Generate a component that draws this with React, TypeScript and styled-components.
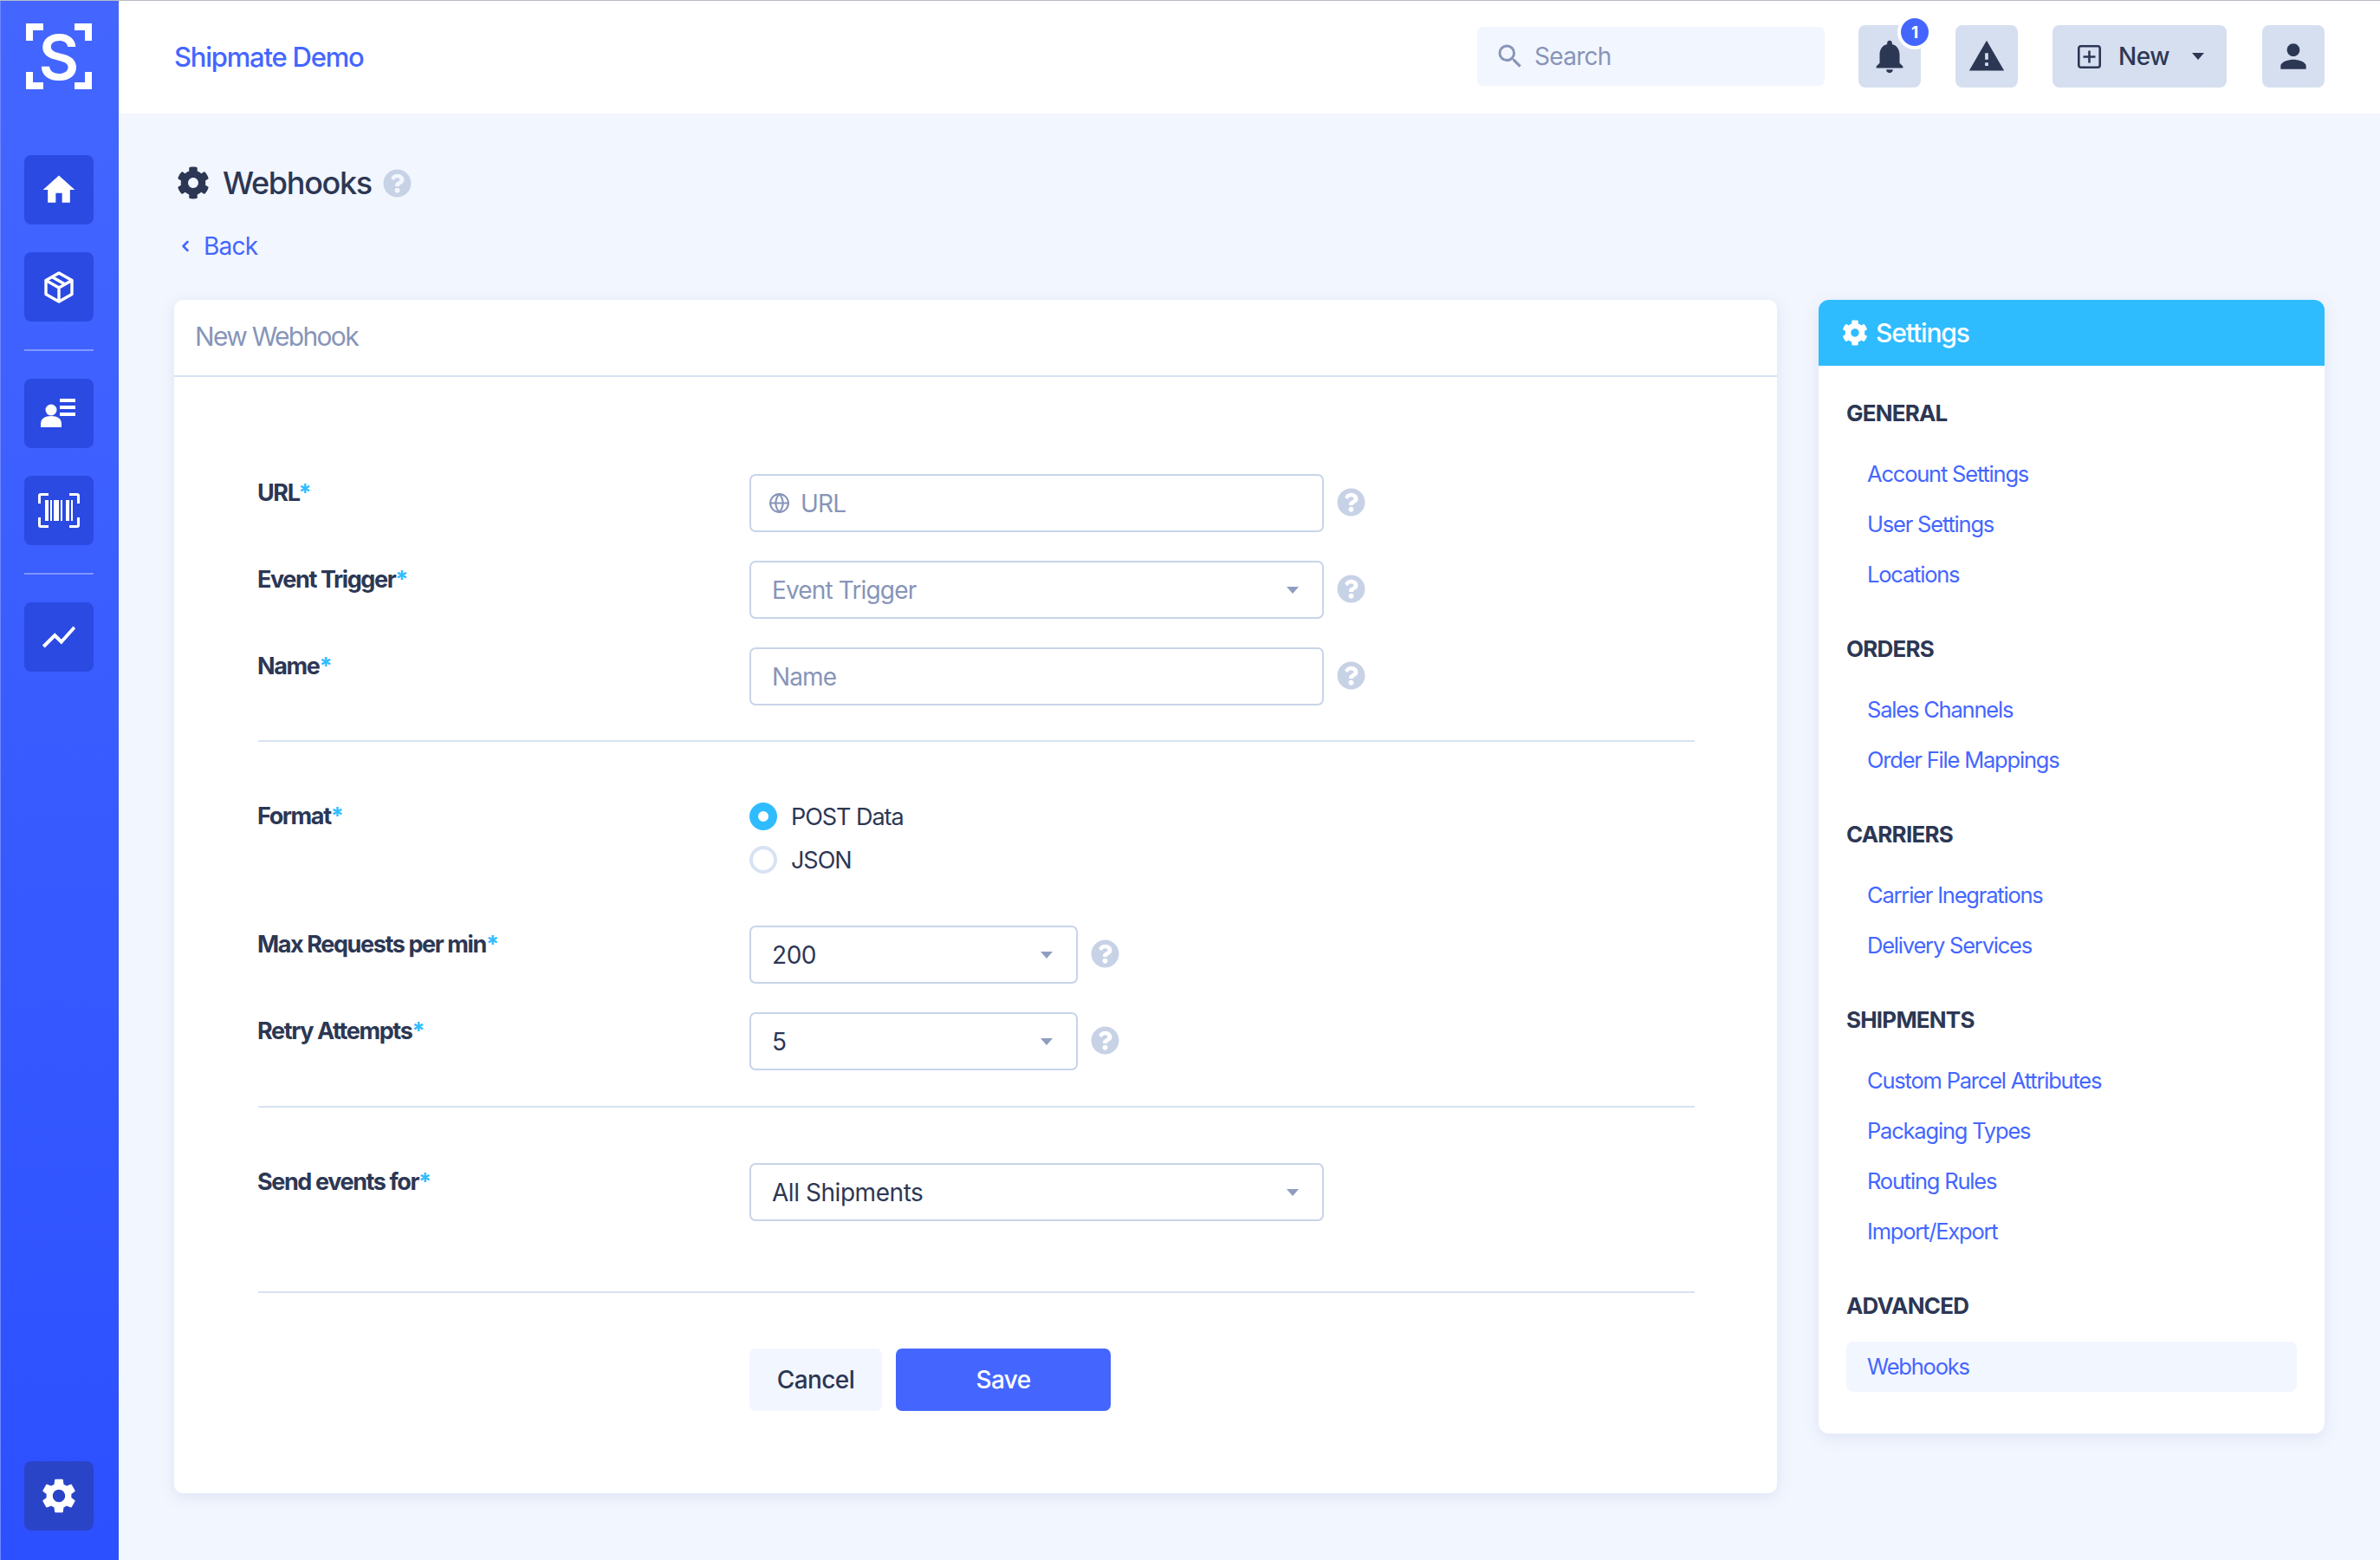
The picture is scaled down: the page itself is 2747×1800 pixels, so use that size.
import React from "react";
import styled, { createGlobalStyle } from "styled-components";
import { MdHome, MdSettings, MdNotifications, MdWarning, MdPerson, MdShowChart, MdSearch } from "react-icons/md";
import { FaCog, FaQuestionCircle } from "react-icons/fa";
import { FiChevronLeft, FiGlobe } from "react-icons/fi";

const FONT = `Inter, "Liberation Sans", sans-serif`;
const BLUE = "#4466ff";
const DARK = "#2c3754";
const MUTED = "#8795b8";
const LINE = "#d8e2f3";
const EDGE = "#c8d4e8";
const CYAN = "#2fbcff";

const Global = createGlobalStyle`
  html, body { margin: 0; padding: 0; background: #f2f6fe; }
  * { box-sizing: border-box; }
  body { font-family: ${FONT}; color: ${DARK}; }
`;

const Shell = styled.div`
  display: flex;
  width: 2747px;
  height: 1800px;
  border-top: 1px solid #b9bcc4;
  overflow: hidden;
`;

const Rail = styled.nav`
  flex: 0 0 137px;
  display: flex;
  flex-direction: column;
  align-items: center;
  padding: 26px 2px 34px 0;
  border-left: 1px solid #6d87ff;
  background: linear-gradient(180deg, #4466ff 0%, #2c50ff 100%);
`;

const Logo = styled.svg`
  width: 76px;
  height: 76px;
  margin-bottom: 76px;
  flex: none;
  overflow: visible;
`;

const RailButton = styled.a<{ $dim?: boolean }>`
  width: 80px;
  height: 80px;
  flex: none;
  display: flex;
  align-items: center;
  justify-content: center;
  border-radius: 8px;
  margin-bottom: ${(p) => (p.$dim ? 0 : 32)}px;
  color: #fff;
  background: ${(p) => (p.$dim ? "#2a44c8" : "#2b4ae2")};
`;

const RailRule = styled.hr`
  width: 80px;
  height: 2px;
  flex: none;
  border: 0;
  margin: 0 0 32px;
  background: rgba(255, 255, 255, 0.35);
`;

const RailSpacer = styled.div`
  flex: 1;
`;

const Main = styled.div`
  flex: 1;
  min-width: 0;
  display: flex;
  flex-direction: column;
`;

const TopBar = styled.header`
  height: 130px;
  flex: none;
  display: flex;
  align-items: center;
  gap: 40px;
  padding: 0 64px 2px 64px;
  background: #fff;
`;

const Brand = styled.a`
  margin-right: auto;
  font-size: 31px;
  font-weight: 500;
  letter-spacing: -1.22px;
  color: ${BLUE};
`;

const SearchBox = styled.div`
  width: 401px;
  height: 68px;
  display: flex;
  align-items: center;
  gap: 10px;
  padding-left: 20px;
  margin-right: -1px;
  border-radius: 6px;
  background: #f2f6fe;
  color: ${MUTED};
  font-size: 28px;
  letter-spacing: -0.7px;
`;

const TopButton = styled.button`
  position: relative;
  height: 72px;
  min-width: 72px;
  display: flex;
  align-items: center;
  justify-content: center;
  border: 0;
  border-radius: 8px;
  padding: 0;
  background: #d6dff0;
  color: ${DARK};
  font-family: ${FONT};
  font-size: 28px;
  font-weight: 500;
  letter-spacing: -0.4px;
`;

const NewButton = styled(TopButton)`
  width: 201px;
  justify-content: flex-start;
  padding-left: 29px;
  margin-right: 1px;
`;

const NewLabel = styled.span`
  margin: 0 26px 0 20px;
`;

const Badge = styled.span`
  position: absolute;
  top: -12px;
  right: -13px;
  width: 40px;
  height: 40px;
  display: flex;
  align-items: center;
  justify-content: center;
  border: 4px solid #fff;
  border-radius: 50%;
  background: ${BLUE};
  color: #fff;
  font-size: 19px;
  font-weight: 700;
`;

const Page = styled.main`
  flex: 1;
  padding: 0 64px;
`;

const TitleRow = styled.div`
  display: flex;
  align-items: center;
  height: 44px;
  margin-top: 58px;
  margin-left: 3px;
  color: ${DARK};
`;

const Title = styled.h1`
  margin: 0 13px 0 15px;
  font-size: 36px;
  font-weight: 500;
  letter-spacing: -1.3px;
`;

const BackLink = styled.a`
  display: flex;
  align-items: center;
  gap: 11px;
  height: 40px;
  margin: 31px 0 42px 3px;
  color: ${BLUE};
  font-size: 28px;
  letter-spacing: -0.8px;
`;

const Columns = styled.div`
  display: grid;
  grid-template-columns: 1850px 584px;
  gap: 48px;
  align-items: start;
`;

const Card = styled.section`
  border-radius: 10px;
  background: #fff;
  box-shadow: 0 4px 18px rgba(110, 135, 195, 0.16);
`;

const CardHead = styled.div`
  height: 89px;
  display: flex;
  align-items: center;
  padding: 0 0 3px 24px;
  border-bottom: 2px solid ${LINE};
  color: ${MUTED};
  font-size: 30px;
  letter-spacing: -1.7px;
`;

const FormBody = styled.div`
  padding: 112px 95px 95px 97px;
`;

const Row = styled.div<{ $mt?: number }>`
  display: grid;
  grid-template-columns: 567px 1fr;
  align-items: start;
  margin-top: ${(p) => p.$mt ?? 0}px;
`;

const Label = styled.label<{ $offset?: number }>`
  display: block;
  height: 42px;
  line-height: 42px;
  margin-top: ${(p) => (p.$offset ?? 0) + 1}px;
  margin-left: -1px;
  font-size: 27px;
  font-weight: 700;
  letter-spacing: -1.4px;
  color: ${DARK};
`;

const Star = styled.span`
  color: ${CYAN};
`;

const FieldWrap = styled.div`
  display: flex;
  align-items: center;
  gap: 15px;
`;

const Box = styled.div<{ $w: number; $placeholder?: boolean; $icon?: boolean }>`
  width: ${(p) => p.$w}px;
  height: 67px;
  display: flex;
  align-items: center;
  gap: 12px;
  padding: 0 27px 0 ${(p) => (p.$icon ? 20 : 24)}px;
  border: 2px solid ${EDGE};
  border-radius: 7px;
  background: #fff;
  font-size: 28px;
  letter-spacing: ${(p) => (p.$placeholder ? -0.85 : -0.45)}px;
  color: ${(p) => (p.$placeholder ? MUTED : DARK)};
`;

const BoxText = styled.span`
  flex: 1;
`;

const GlobeIcon = styled(FiGlobe)`
  flex: none;
  width: 25px;
  height: 25px;
`;

const Caret = styled.i<{ $color?: string }>`
  flex: none;
  width: 0;
  height: 0;
  border-left: 7px solid transparent;
  border-right: 7px solid transparent;
  border-top: 8px solid ${(p) => p.$color ?? "#8f9dc0"};
`;

const Help = styled(FaQuestionCircle)`
  flex: none;
  width: 33px;
  height: 33px;
  color: #c8d2e6;
`;

const FieldHelp = styled(Help)`
  margin-top: -2px;
`;

const Rule = styled.hr<{ $mt: number; $mb: number }>`
  height: 2px;
  border: 0;
  margin: ${(p) => p.$mt}px 0 ${(p) => p.$mb}px;
  background: ${LINE};
`;

const Radios = styled.div`
  display: flex;
  flex-direction: column;
`;

const RadioLine = styled.div`
  height: 50px;
  display: flex;
  align-items: center;
  gap: 16px;
  font-size: 27px;
  letter-spacing: -1.05px;
  color: ${DARK};
`;

const RadioDot = styled.span<{ $on?: boolean }>`
  width: 32px;
  height: 32px;
  border-radius: 50%;
  background: #fff;
  border: ${(p) => (p.$on ? `10px solid ${CYAN}` : `4px solid ${LINE}`)};
`;

const Actions = styled.div`
  display: flex;
  gap: 16px;
  padding-left: 567px;
`;

const Btn = styled.button<{ $primary?: boolean; $w: number }>`
  width: ${(p) => p.$w}px;
  height: 72px;
  border: 0;
  border-radius: 7px;
  font-family: ${FONT};
  font-size: 28px;
  font-weight: 500;
  letter-spacing: -0.6px;
  background: ${(p) => (p.$primary ? BLUE : "#f2f6fe")};
  color: ${(p) => (p.$primary ? "#fff" : DARK)};
`;

const SidePanel = styled.aside`
  height: 1308px;
  border-radius: 12px;
  background: #fff;
  box-shadow: 0 4px 18px rgba(110, 135, 195, 0.16);
  overflow: hidden;
`;

const SideHead = styled.div`
  height: 76px;
  display: flex;
  align-items: center;
  gap: 9px;
  padding-left: 27px;
  background: ${CYAN};
  color: #fff;
  font-size: 30px;
  font-weight: 500;
  letter-spacing: -1.15px;
`;

const SideBody = styled.div`
  padding: 35px 32px 0;
`;

const SideGroup = styled.div`
  margin-bottom: 37px;
`;

const SideTitle = styled.h3`
  height: 40px;
  line-height: 40px;
  margin: 0 0 21px;
  font-size: 26px;
  font-weight: 700;
  letter-spacing: -0.8px;
  color: ${DARK};
`;

const SideLink = styled.a<{ $active?: boolean }>`
  display: block;
  height: 58px;
  line-height: 58px;
  padding-left: 24px;
  border-radius: 8px;
  font-size: 25.5px;
  letter-spacing: -1.2px;
  color: ${BLUE};
  background: ${(p) => (p.$active ? "#f2f6fe" : "transparent")};
`;

const CubeIcon = () => (
  <svg width="34" height="37" viewBox="0 0 34 37" fill="none" stroke="#fff" strokeWidth="3.4" strokeLinejoin="round">
    <path d="M17 2 32 10.5v16L17 35 2 26.5v-16z" />
    <path d="M2 10.5 17 19l15-8.5M17 19v16M9 6.5l15 8.5" />
  </svg>
);

const ContactIcon = () => (
  <svg width="42" height="34" viewBox="0 0 42 34" fill="#fff">
    <circle cx="12" cy="13" r="6.5" />
    <path d="M0 33v-4c0-6 5-9 12-9s12 3 12 9v4z" />
    <rect x="22" y="0" width="18" height="4" />
    <rect x="22" y="8" width="18" height="4" />
    <rect x="22" y="16" width="18" height="4" />
  </svg>
);

const BarcodeIcon = () => (
  <svg width="48" height="40" viewBox="0 0 48 40" fill="#fff">
    <path d="M0 3a3 3 0 0 1 3-3h9v3H3v9H0zM48 3a3 3 0 0 0-3-3h-9v3h9v9h3zM0 37a3 3 0 0 0 3 3h9v-3H3v-9H0zM48 37a3 3 0 0 1-3 3h-9v-3h9v-9h3z" />
    <rect x="8" y="8" width="4" height="24" />
    <rect x="14" y="8" width="2" height="24" />
    <rect x="18" y="8" width="6" height="24" />
    <rect x="26" y="8" width="2" height="24" />
    <rect x="32" y="8" width="4" height="24" />
    <rect x="38" y="8" width="2" height="24" />
  </svg>
);

const PlusSquare = () => (
  <svg width="27" height="27" viewBox="0 0 27 27" fill="none" stroke="#2c3754" strokeWidth="2.6">
    <rect x="1.3" y="1.3" width="24.4" height="24.4" rx="2.5" />
    <path d="M13.5 6.5v14M6.5 13.5h14" />
  </svg>
);

const groups: { title: string; links: string[] }[] = [
  { title: "GENERAL", links: ["Account Settings", "User Settings", "Locations"] },
  { title: "ORDERS", links: ["Sales Channels", "Order File Mappings"] },
  { title: "CARRIERS", links: ["Carrier Inegrations", "Delivery Services"] },
  { title: "SHIPMENTS", links: ["Custom Parcel Attributes", "Packaging Types", "Routing Rules", "Import/Export"] },
  { title: "ADVANCED", links: ["Webhooks"] },
];

const Field = ({ label, children, mt, help = true }: { label: string; children: React.ReactNode; mt?: number; help?: boolean }) => (
  <Row $mt={mt}>
    <Label>
      {label}
      <Star>*</Star>
    </Label>
    <FieldWrap>
      {children}
      {help && <FieldHelp />}
    </FieldWrap>
  </Row>
);

export default function App() {
  return (
    <>
      <Global />
      <Shell>
        <Rail>
          <Logo viewBox="0 0 76 76">
            <path fill="#fff" d="M0 0h20v8H8v12H0zM76 0H56v8h12v12h8zM0 76h20v-8H8V56H0zM76 76H56v-8h12V56h8z" />
            <text x="38" y="65" textAnchor="middle" fontFamily="Inter, sans-serif" fontSize="72" fontWeight="600" fill="#fff">S</text>
          </Logo>
          <RailButton><MdHome size={44} /></RailButton>
          <RailButton><CubeIcon /></RailButton>
          <RailRule />
          <RailButton><ContactIcon /></RailButton>
          <RailButton><BarcodeIcon /></RailButton>
          <RailRule />
          <RailButton><MdShowChart size={46} /></RailButton>
          <RailSpacer />
          <RailButton $dim><MdSettings size={48} /></RailButton>
        </Rail>
        <Main>
          <TopBar>
            <Brand>Shipmate Demo</Brand>
            <SearchBox><MdSearch size={36} />Search</SearchBox>
            <TopButton><MdNotifications size={46} /><Badge>1</Badge></TopButton>
            <TopButton><MdWarning size={44} /></TopButton>
            <NewButton>
              <PlusSquare />
              <NewLabel>New</NewLabel>
              <Caret $color={DARK} />
            </NewButton>
            <TopButton><MdPerson size={44} /></TopButton>
          </TopBar>
          <Page>
            <TitleRow>
              <FaCog size={38} />
              <Title>Webhooks</Title>
              <Help />
            </TitleRow>
            <BackLink><FiChevronLeft size={20} strokeWidth={3} />Back</BackLink>
            <Columns>
              <Card>
                <CardHead>New Webhook</CardHead>
                <FormBody>
                  <Field label="URL">
                    <Box $w={663} $placeholder $icon>
                      <GlobeIcon />
                      <BoxText>URL</BoxText>
                    </Box>
                  </Field>
                  <Field label="Event Trigger" mt={33}>
                    <Box $w={663} $placeholder><BoxText>Event Trigger</BoxText><Caret /></Box>
                  </Field>
                  <Field label="Name" mt={33}>
                    <Box $w={663} $placeholder><BoxText>Name</BoxText></Box>
                  </Field>
                  <Rule $mt={40} $mb={61} />
                  <Row>
                    <Label $offset={3}>Format<Star>*</Star></Label>
                    <Radios>
                      <RadioLine><RadioDot $on />POST Data</RadioLine>
                      <RadioLine><RadioDot />JSON</RadioLine>
                    </Radios>
                  </Row>
                  <Field label="Max Requests per min" mt={51}>
                    <Box $w={379}><BoxText>200</BoxText><Caret /></Box>
                  </Field>
                  <Field label="Retry Attempts" mt={33}>
                    <Box $w={379}><BoxText>5</BoxText><Caret /></Box>
                  </Field>
                  <Rule $mt={41} $mb={64} />
                  <Field label="Send events for" help={false}>
                    <Box $w={663}><BoxText>All Shipments</BoxText><Caret /></Box>
                  </Field>
                  <Rule $mt={81} $mb={64} />
                  <Actions>
                    <Btn $w={153}>Cancel</Btn>
                    <Btn $w={248} $primary>Save</Btn>
                  </Actions>
                </FormBody>
              </Card>
              <SidePanel>
                <SideHead><FaCog size={30} />Settings</SideHead>
                <SideBody>
                  {groups.map((g) => (
                    <SideGroup key={g.title}>
                      <SideTitle>{g.title}</SideTitle>
                      {g.links.map((l) => (
                        <SideLink key={l} $active={l === "Webhooks"}>{l}</SideLink>
                      ))}
                    </SideGroup>
                  ))}
                </SideBody>
              </SidePanel>
            </Columns>
          </Page>
        </Main>
      </Shell>
    </>
  );
}
